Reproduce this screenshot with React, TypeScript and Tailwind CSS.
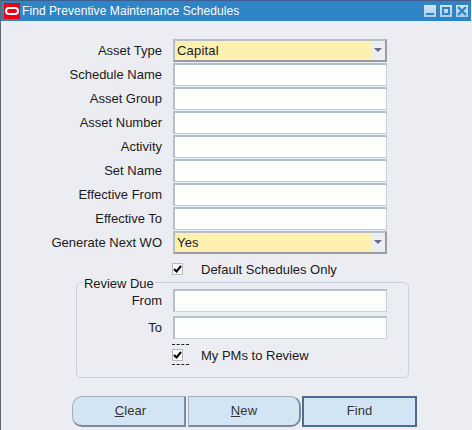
import { ReactNode } from "react";

const font = { fontFamily: '"Liberation Sans", Arial, sans-serif' };

function Field({ label, value, yellow, list }: { label: string; value?: string; yellow?: boolean; list?: boolean }) {
    return (
        <div className="flex items-center h-[24px]">
            <div className="w-[161px] mt-[2px] text-right text-[13px] text-[#1a1a1a] whitespace-nowrap">{label}</div>
            <div
                className={`ml-[11px] w-[214px] h-[23px] flex items-center border border-[#c3d0e2] border-t-2 border-l-2 border-t-[#b4bfcc] border-l-[#b4bfcc] ${yellow ? "bg-[#fdf0b0] border-r-[#9c9c9c] border-b-[#9c9c9c] border-r-2 border-b-2" : "bg-[#fdfffd]"}`}
            >
                <span className="flex-1 pl-[2px] mt-[1px] text-[13px] tracking-[0.2px] text-[#1a1a1a]">{value}</span>
                {list && (
                    <div className="w-[14px] h-full bg-[#ecedf3] flex items-center justify-center">
                        <div className="w-0 h-0 border-l-[4px] border-r-[4px] border-t-[4px] border-l-transparent border-r-transparent border-t-[#6a6a84]" />
                    </div>
                )}
            </div>
        </div>
    );
}

function Check({ label, dashed }: { label: string; dashed?: boolean }) {
    return (
        <div className="flex items-start h-[21px] pl-[171px]">
            <div className={`w-[17px] h-[21px] flex items-center ${dashed ? "border-y border-dashed border-[#222]" : ""}`}>
                <div className="w-[11px] h-[12px] bg-[#fdfffd] border border-[#b5b9c2] flex items-center justify-center">
                    <svg width="9" height="8" viewBox="0 0 9 8">
                        <path d="M1 4 L3.5 6.5 L8 1" stroke="#000" strokeWidth="2" fill="none" />
                    </svg>
                </div>
            </div>
            <span className="ml-[12px] mt-[3px] text-[13px] leading-[18px] text-[#1a1a1a]">{label}</span>
        </div>
    );
}

function Btn({ children, className }: { children: ReactNode; className: string }) {
    return (
        <div className={`h-[31px] pb-[1px] bg-[#d3e5f4] flex items-center justify-center text-[13px] tracking-[0.1px] text-[#333] ${className}`}>
            {children}
        </div>
    );
}

export default function App() {
    return (
        <div className="w-[472px] h-[430px] bg-[#ecedf3] flex flex-col overflow-hidden border-l border-l-[#5a6a7a]" style={font}>
            {/* Title bar */}
            <div className="h-[21px] bg-[#2e84c4] border-t border-t-[#3f5f8a] flex items-center mr-[1px]">
                <div className="ml-[3px] w-[16px] h-[16px] bg-[#f00010] flex items-center justify-center">
                    <div className="w-[14px] h-[8px] rounded-full border-2 border-white" />
                </div>
                <span className="ml-[2px] text-white text-[12px] tracking-[0.07px] flex-1">Find Preventive Maintenance Schedules</span>
                <div className="flex gap-[4px] mr-[3px]">
                    <div className="w-[12px] h-[12px] bg-gradient-to-b from-[#d2e5f4] to-[#a8cce8] flex items-end justify-center pb-[2px]">
                        <div className="w-[8px] h-[2px] bg-[#2e84c4]" />
                    </div>
                    <div className="w-[12px] h-[12px] bg-gradient-to-b from-[#d2e5f4] to-[#a8cce8] flex items-center justify-center">
                        <div className="w-[8px] h-[8px] border-2 border-[#2e84c4]" />
                    </div>
                    <div className="w-[12px] h-[12px] bg-gradient-to-b from-[#d2e5f4] to-[#a8cce8] flex items-center justify-center">
                        <svg width="10" height="10" viewBox="0 0 10 10">
                            <path d="M1 1 L9 9 M9 1 L1 9" stroke="#2e84c4" strokeWidth="2.4" />
                        </svg>
                    </div>
                </div>
            </div>

            {/* Form */}
            <div className="pt-[17px]">
                <Field label="Asset Type" value="Capital" yellow list />
                <Field label="Schedule Name" />
                <Field label="Asset Group" />
                <Field label="Asset Number" />
                <Field label="Activity" />
                <Field label="Set Name" />
                <Field label="Effective From" />
                <Field label="Effective To" />
                <Field label="Generate Next WO" value="Yes" yellow list />
                <div className="pt-[4px]">
                    <Check label="Default Schedules Only" />
                </div>
            </div>

            {/* Review Due */}
            <div className="relative mt-[3px] ml-[75px] w-[333px] h-[96px] border border-[#c3d0e2] rounded-[5px]">
                <span className="absolute left-[6px] top-[-7px] bg-[#ecedf3] px-[1px] text-[13px] leading-[16px] tracking-[-0.05px] text-[#1a1a1a]">Review Due</span>
                <div className="-ml-[76px] pt-[5px]">
                    <Field label="From" />
                    <div className="h-[3px]" />
                    <Field label="To" />
                    <div className="h-[5px]" />
                    <Check label="My PMs to Review" dashed />
                </div>
            </div>

            {/* Buttons */}
            <div className="flex mt-[18px] ml-[71px]">
                <Btn className="w-[114px] pl-[4px] rounded-l-[10px] border border-[#a8aeb0] border-r-[#7d8b9c] border-b-[#7d8b9c] border-b-2 border-r-2">
                    <span><span className="underline">C</span>lear</span>
                </Btn>
                <Btn className="ml-[2px] w-[113px] rounded-r-[10px] border border-[#a8aeb0] border-r-[#7d8b9c] border-b-[#7d8b9c] border-b-2 border-r-2">
                    <span><span className="underline">N</span>ew</span>
                </Btn>
                <Btn className="ml-[1px] w-[115px] border-2 border-[#4d6c94]">Find</Btn>
            </div>
        </div>
    );
}
